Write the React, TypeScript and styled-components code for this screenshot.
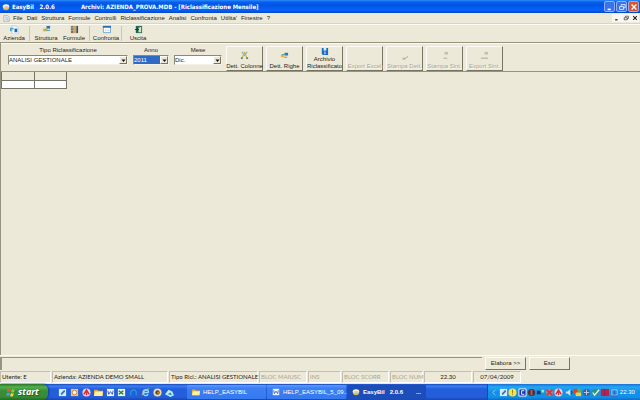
import React from "react";
import styled, { createGlobalStyle, css } from "styled-components";

const Global = createGlobalStyle`
  *, *::before, *::after { box-sizing: border-box; }
  body { margin: 0; background: #ece9d8; }
  button, select, input { font: inherit; color: inherit; margin: 0; padding: 0; border-radius: 0; }
  ul { list-style: none; margin: 0; padding: 0; }
  svg { flex: none; display: block; }
`;

const Window = styled.div`
  display: flex;
  flex-direction: column;
  min-height: 100vh;
  background: #ece9d8;
  color: #1c1c1a;
  font: 6px/8px "Liberation Sans", Arial, sans-serif;
  white-space: nowrap;
`;

const TitleBar = styled.header`
  display: flex;
  align-items: center;
  height: 13px;
  padding: 0 1px 0 2px;
  gap: 2px;
  color: #fff;
  background: linear-gradient(#2b8df8 0, #0a5fee 2px, #0054e3 5px, #0562fb 10px, #0047c8 13px);
`;

const Title = styled.h1`
  display: flex;
  flex: 1;
  gap: 26px;
  margin: 0;
  font: bold 6px/8px "DejaVu Sans Condensed", "DejaVu Sans", sans-serif;
`;

const CaptionButtons = styled.div`
  display: flex;
  gap: 1px;
`;

const CaptionButton = styled.button<{ $close?: boolean }>`
  display: grid;
  place-items: center;
  width: 11px;
  height: 11px;
  border: 1px solid #8fb0f3;
  border-radius: 2px;
  background: ${(p) => (p.$close ? "#e0532c" : "#3a72ea")};
`;

const MenuBar = styled.nav`
  display: flex;
  align-items: center;
  height: 11px;
  padding: 0 1px 0 3px;
  border-bottom: 1px solid #d9d5c3;
`;

const Menus = styled.ul`
  display: flex;
  flex: 1;
  margin-left: 1px;
`;

const MenuButton = styled.button`
  display: block;
  padding: 0 2px;
  border: 0;
  background: none;
`;

const ChildButtons = styled.div`
  display: flex;
  background: #f8f7f2;
`;

const ChildButton = styled.button`
  display: grid;
  place-items: center;
  width: 9px;
  height: 8px;
  border: 0;
  background: none;
`;

const ToolBar = styled.div`
  display: flex;
  height: 18px;
  border-top: 1px solid #fbfaf4;
`;

const Tool = styled.button`
  display: flex;
  flex-direction: column;
  align-items: center;
  justify-content: center;
  width: 28px;
  border: 0;
  background: none;
`;

const Separator = styled.span`
  width: 1px;
  margin: 1px 2px 1px 1px;
  background: #cbc7b6;
`;

const FilterBar = styled.form`
  display: flex;
  align-items: flex-end;
  height: 30px;
  border: solid #97937f;
  border-width: 1px 0 1px 1px;
  box-shadow: inset 0 1px #fbfaf3;
`;

const Fields = styled.div`
  display: flex;
  gap: 5px;
  align-self: flex-start;
  padding: 3px 4px 0 7px;
`;

const Field = styled.label<{ $size: "wide" | "small" | "medium" }>`
  display: flex;
  flex-direction: column;
  align-items: center;
  width: ${(p) => ({ wide: 120, small: 36, medium: 48 })[p.$size]}px;
`;

const Combo = styled.span`
  display: flex;
  width: 100%;
  height: 10px;
  margin-top: 1px;
  border: 1px solid #8c8977;
  border-right-color: #f4f2e8;
  border-bottom-color: #f4f2e8;
  background: #fff;
`;

const Select = styled.select<{ $selected?: boolean }>`
  flex: 1;
  min-width: 0;
  appearance: none;
  border: 0;
  outline: 0;
  line-height: 8px;
  background: #fff;
  ${(p) => p.$selected && css`background: #316ac5; color: #fff;`}
`;

const Arrow = styled.span`
  display: grid;
  place-items: center;
  width: 8px;
  border: 1px solid #fff;
  border-right-color: #77745f;
  border-bottom-color: #77745f;
  background: #ece9d8;
`;

const Commands = styled.div`
  display: flex;
  gap: 3px;
`;

const raised = css`
  border: 1px solid #fbfaf4;
  border-right-color: #77745f;
  border-bottom-color: #77745f;
  background: #ece9d8;
`;

const Command = styled.button`
  display: flex;
  flex-direction: column;
  align-items: center;
  justify-content: flex-end;
  width: 37px;
  height: 25px;
  line-height: 7px;
  white-space: pre;
  ${raised}
  &:disabled { color: #aaa693; text-shadow: 1px 1px #faf8ef; }
`;

const CommandIcon = styled.span`
  display: grid;
  flex: 1;
  place-items: center;
`;

const Workspace = styled.main`
  flex: 1;
  border-left: 1px solid #97937f;
`;

const Grid = styled.table`
  width: 66px;
  border-collapse: collapse;
  table-layout: fixed;
  th, td { height: 8px; padding: 0; border: 1px solid #77756b; }
  th { border-top: 0; }
  td { background: #fff; }
`;

const Footer = styled.div`
  display: flex;
  align-items: center;
  gap: 3px;
  height: 15px;
  padding-right: 70px;
  border-top: 1px solid #fbfaf4;
`;

const Progress = styled.div`
  flex: 1;
  height: 13px;
  border: solid #97937f;
  border-width: 1px 0 0 2px;
`;

const Action = styled.button`
  width: 41px;
  height: 13px;
  ${raised}
`;

const StatusBar = styled.footer`
  display: flex;
  gap: 1px;
  height: 14px;
  padding-top: 1px;
  font-family: Lato, "Liberation Sans", sans-serif;
`;

const StatusCell = styled.span<{ $w: number; $off?: boolean; $center?: boolean }>`
  width: ${(p) => p.$w}px;
  height: 12px;
  padding: 0 1px;
  border: 1px solid #c4c0ae;
  border-right-color: #fff;
  border-bottom-color: #fff;
  line-height: 10px;
  text-align: ${(p) => (p.$center ? "center" : "left")};
  ${(p) => p.$off && css`color: #a8a593;`}
`;

const TaskBar = styled.div`
  display: flex;
  height: 16px;
  color: #fff;
  background: linear-gradient(#1b48b8 0, #3a80f2 2px, #245edb 5px, #245edb 13px, #1b46ac 16px);
`;

const Start = styled.button`
  display: flex;
  align-items: center;
  gap: 2px;
  width: 48px;
  padding-left: 6px;
  border: 0;
  border-radius: 0 6px 6px 0;
  background: linear-gradient(#2a7429, #54b04c 3px, #388d36 7px, #368b34 13px, #236b24);
  box-shadow: 1px 0 2px #123e91;
  font: italic bold 9px/12px "Open Sans", sans-serif;
  text-shadow: 1px 1px 1px #205d20;
`;

const QuickLaunch = styled.div`
  display: flex;
  align-items: center;
  justify-content: space-between;
  width: 139px;
  padding: 0 13px 0 10px;
`;

const IconButton = styled.button`
  display: grid;
  place-items: center;
  width: 9px;
  height: 11px;
  border: 0;
  background: none;
`;

const Tasks = styled.div`
  display: flex;
  flex: 1;
  gap: 1px;
  padding: 1px 0;
`;

const Task = styled.button<{ $active?: boolean }>`
  display: flex;
  align-items: center;
  gap: 3px;
  width: 79px;
  padding: 0 5px;
  border: 0;
  border-radius: 1px;
  background: ${(p) => (p.$active ? "#1c4db8" : "linear-gradient(#5a9cff, #3c80f4 3px, #3679ee)")};
  font-weight: ${(p) => (p.$active ? 700 : 400)};
  span { flex: 1; text-align: left; white-space: pre; }
`;

const Tray = styled.div`
  display: flex;
  align-items: center;
  justify-content: space-between;
  width: 153px;
  padding: 0 5px 0 2px;
  border-left: 1px solid #0b4fb0;
  background: linear-gradient(#1d6fd6, #23a6f2 3px, #1290e8 8px, #1391e8 13px, #0d6bc4);
`;

const Clock = styled.time`
  margin-left: 1px;
`;

type Name = string;

const shapes: Record<Name, React.ReactNode> = {
  app: <><ellipse cx="5" cy="6" rx="4" ry="3" fill="#d8b34a" /><ellipse cx="5" cy="4" rx="4" ry="2.5" fill="#fff6cf" /><path d="M3 5h5" stroke="#6f94b8" /></>,
  doc: <><path d="M1 1h6l2 2v6H1z" fill="#e5eef3" stroke="#9eabbb" /><path d="M3 4h4M3 6h4" stroke="#8bb8ce" /><path d="M6 7h3" stroke="#d4b554" /></>,
  azienda: <><path d="M2 1h5l2 2v7H2z" fill="#f4faff" stroke="#b9cedb" /><path d="M0 3h4v2H2v2H0z" fill="#46abd5" /><path d="M5 4h3v4H5z" fill="#1f67b5" /></>,
  struttura: <><path d="M5 1h4v3H5z" fill="#2578bd" /><path d="M1 4h5v3H1z" fill="#e4bd36" /><path d="M5 4L3 6M5 6h4" stroke="#4c93ad" /></>,
  formule: <><path d="M1 1h3v8H1z" fill="#777467" /><path d="M4 1h3v8H4z" fill="#dba044" /><path d="M7 1h2v8H7z" fill="#3b4e74" /><path d="M1 3h6M1 6h6" stroke="#b8ae91" /></>,
  confronta: <><path d="M1.5 1.5h8v7h-8z" fill="#fff" stroke="#69a4cf" /><path d="M1 2h9" stroke="#2b68af" strokeWidth="2" /><path d="M4 5v2M6 6h2" stroke="#b5c3ce" /></>,
  uscita: <><path d="M2 1h7v8H2z" fill="#206d5c" /><path d="M5 3l3-1v6H5z" fill="#d7e4bb" /><path d="M1 5h4M3 3l2 2-2 2" stroke="#123b38" fill="none" /></>,
  colonne: <><path d="M2 1l3 4 3-4" stroke="#79b9c9" fill="none" strokeWidth="1.3" /><path d="M5 1L2 9M5 1l3 8" stroke="#e1ae2d" strokeWidth="1.3" fill="none" /><path d="M1 7h2v2H1zM7 7h2v2H7z" fill="#438e9d" /></>,
  righe: <><path d="M5 2h4v3H5z" fill="#2578bd" /><path d="M1 4h4v3H1z" fill="#e8b92e" /><path d="M2 4h3M5 7h3" stroke="#5696a7" /></>,
  archivio: <><path d="M2 1h7v8H3L2 7z" fill="#196dc1" /><path d="M4 1h3v3H4z" fill="#d6edff" /><path d="M5 5h1v3H5z" fill="#fff" /></>,
  dett: <path d="M3 8h3l3-2M3 9h3" stroke="#a5a28f" fill="none" />,
  sint: <><path d="M5 1h4v3H5z" fill="#c4c0ae" /><path d="M4 8h4" stroke="#a5a28f" /></>,
  sint2: <><path d="M5 1h4v3H5z" fill="#c4c0ae" /><path d="M1 8h8" stroke="#a5a28f" /></>,
  min: <path d="M2 8h4" stroke="currentColor" strokeWidth="2" />,
  restore: <path d="M4 3.5V2h5v4H7M2 4.5h5V8H2z" fill="none" stroke="currentColor" />,
  close: <path d="M2 2l6 6M8 2L2 8" stroke="currentColor" strokeWidth="1.7" />,
  arrow: <path d="M1 3h8L5 8z" fill="#111" />,
  windows: <><path d="M1 2q2-1 4 0L4 5q-2-1-3 0z" fill="#f05a28" /><path d="M6 2q2 1 3 0L8 5Q7 6 5 5z" fill="#89c940" /><path d="M1 6q1-1 3 0L3 9q-1-1-3 0z" fill="#4f9bec" /><path d="M5 6q2 1 3 0L7 9q-1 1-3 0z" fill="#ffd02f" /></>,
  desk: <><path d="M1 1h8v8H1z" fill="#d6edff" /><path d="M3 6l4-4 1 2-4 4z" fill="#2d77bd" /></>,
  outlook: <><path d="M1 1h8v8H1z" fill="#f4c16e" /><circle cx="5" cy="5" r="2.5" fill="#fff" stroke="#d87520" /></>,
  red: <><circle cx="5" cy="5" r="4.5" fill="#e8d5d9" /><path d="M2 7l3-5 3 5M5 2v6" stroke="#d52d3a" strokeWidth="1.6" fill="none" /></>,
  folder: <><path d="M0 2h4l1 1h5v6H0z" fill="#e0a82f" /><path d="M1 4h9L9 9H0z" fill="#fff0a3" /></>,
  word: <><path d="M1 1h8v8H1z" fill="#eef4ff" /><path d="M2 3l1 4 2-3 2 3 1-4" stroke="#2553b5" fill="none" /></>,
  excel: <><path d="M1 1h8v8H1z" fill="#e5f5e3" /><path d="M2 3l5 4M7 3L2 7" stroke="#267d39" strokeWidth="1.5" /></>,
  cyan: <path d="M2 8V4q3-4 6 0v4" stroke="#259cdb" strokeWidth="1.3" fill="none" />,
  ie: <><path d="M8 7Q5 10 3 7q-2-4 2-5 4 0 3 3H3" stroke="#8ed8ff" strokeWidth="1.6" fill="none" /><path d="M1 8Q4 1 9 1" stroke="#eac557" fill="none" /></>,
  media: <><circle cx="5" cy="5" r="4.5" fill="#e8dfb5" /><circle cx="5" cy="5" r="2.5" fill="#5b463b" /><path d="M5 4l2 1-2 2z" fill="#ef932e" /></>,
  cloud: <><path d="M0 7l4-5 4 2 2 4-4 2z" fill="#bdebf2" /><path d="M3 7l3-2 2 3z" fill="#218ba4" /></>,
  chevron: <path d="M6 2L3 5l3 3" stroke="#8ed0ff" fill="none" />,
  shield: <><circle cx="5" cy="5" r="4.5" fill="#ffe13c" /><path d="M5 2v4M5 7v1" stroke="#8e741d" /></>,
  blue: <><path d="M1 1h8v8H1z" fill="#1836af" stroke="#fff" /><path d="M7 3H4v4h3" stroke="#fff" fill="none" /></>,
  dark: <><circle cx="5" cy="5" r="4" fill="#46333e" /><path d="M5 2v6" stroke="#e34b38" strokeWidth="2" /></>,
  net: <><path d="M1 3h4v4H1z" fill="#183963" /><path d="M6 2h3v3H6z" fill="#a6e2a5" /></>,
  x: <><circle cx="5" cy="5" r="4" fill="#7b95a5" /><path d="M2 2l6 6M8 2L2 8" stroke="#df333c" strokeWidth="2" /></>,
  sound: <><path d="M2 4h2l3-3v8L4 6H2z" fill="#ddd" /><path d="M8 3q2 2 0 4" stroke="#183963" fill="none" /></>,
  mix: <><path d="M1 1h4v5H1z" fill="#e23e28" /><path d="M5 1h4v4H5z" fill="#60b443" /><path d="M3 5h6v4H3z" fill="#f1ce45" /></>,
  globe: <><circle cx="5" cy="5" r="4" fill="#3b5f9f" /><path d="M2 5h6M5 2v6" stroke="#bed5ec" /></>,
  check: <><circle cx="5" cy="5" r="4" fill="#348e88" /><path d="M2 5l2 3 5-6" stroke="#e1f8d4" fill="none" strokeWidth="1.5" /></>,
  block: <><path d="M1 1h9v8H1z" fill="#c21f43" /><path d="M5 1v8" stroke="#70286c" /></>,
  device: <><path d="M2 2h6v6H2z" fill="none" stroke="#a4c5e5" /><path d="M1 9h8M5 3v4" stroke="#385cb0" /></>,
};

function Icon({ name, size = 9 }: { name: Name; size?: number }) {
  return <svg width={size} height={size} viewBox="0 0 10 10" aria-hidden="true">{shapes[name]}</svg>;
}

const menus = ["File", "Dati", "Struttura", "Formule", "Controlli", "Riclassificazione", "Analisi", "Confronta", "Utilita'", "Finestre", "?"];

const tools = [
  { label: "Azienda", icon: "azienda", end: true },
  { label: "Struttura", icon: "struttura" },
  { label: "Formule", icon: "formule", end: true },
  { label: "Confronta", icon: "confronta", end: true },
  { label: "Uscita", icon: "uscita" },
];

const fields = [
  { label: "Tipo Riclassificazione", value: "ANALISI GESTIONALE", size: "wide" as const },
  { label: "Anno", value: "2011", size: "small" as const, selected: true },
  { label: "Mese", value: "Dic.", size: "medium" as const },
];

const commands = [
  { label: "Dett. Colonne", icon: "colonne" },
  { label: "Dett. Righe", icon: "righe" },
  { label: "Archivio\nRiclassificato", icon: "archivio" },
  { label: "Export Excel", off: true },
  { label: "Stampa Dett.", icon: "dett", off: true },
  { label: "Stampa Sint.", icon: "sint", off: true },
  { label: "Export Sint.", icon: "sint2", off: true },
];

const status = [
  { text: "Utente: E", w: 51 },
  { text: "Azienda: AZIENDA DEMO SMALL", w: 116 },
  { text: "Tipo Ricl.: ANALISI GESTIONALE", w: 89 },
  { text: "BLOC MAIUSC", w: 48, off: true },
  { text: "INS", w: 33, off: true },
  { text: "BLOC SCORR", w: 47, off: true },
  { text: "BLOC NUM", w: 33, off: true },
  { text: "22.30", w: 48, center: true },
  { text: "07/04/2009", w: 48, center: true },
];

const launchers = ["desk", "outlook", "red", "folder", "word", "excel", "cyan", "ie", "media", "cloud"];
const trayIcons = ["chevron", "desk", "shield", "blue", "dark", "net", "x", "red", "sound", "mix", "globe", "check", "block", "device"];
const controls = [["min", "Riduci a icona"], ["restore", "Ripristina"], ["close", "Chiudi"]];

export default function App() {
  return (
    <>
      <Global />
      <Window>
        <TitleBar>
          <Icon name="app" size={8} />
          <Title><span>EasyBil &nbsp; 2.0.6</span><span>Archivi: AZIENDA_PROVA.MDB - [Riclassificazione Mensile]</span></Title>
          <CaptionButtons>
            {controls.map(([icon, label]) => (
              <CaptionButton key={icon} $close={icon === "close"} aria-label={label}><Icon name={icon} size={8} /></CaptionButton>
            ))}
          </CaptionButtons>
        </TitleBar>
        <MenuBar>
          <Icon name="doc" size={7} />
          <Menus>{menus.map((m) => <li key={m}><MenuButton>{m}</MenuButton></li>)}</Menus>
          <ChildButtons>
            {controls.map(([icon, label]) => (
              <ChildButton key={icon} aria-label={`${label} finestra`}><Icon name={icon} size={6} /></ChildButton>
            ))}
          </ChildButtons>
        </MenuBar>
        <ToolBar>
          {tools.map((t) => (
            <React.Fragment key={t.label}>
              <Tool><Icon name={t.icon} />{t.label}</Tool>
              {t.end && <Separator />}
            </React.Fragment>
          ))}
        </ToolBar>
        <FilterBar onSubmit={(e) => e.preventDefault()}>
          <Fields>
            {fields.map((f) => (
              <Field key={f.label} $size={f.size}>
                {f.label}
                <Combo>
                  <Select $selected={f.selected}><option>{f.value}</option></Select>
                  <Arrow><Icon name="arrow" size={5} /></Arrow>
                </Combo>
              </Field>
            ))}
          </Fields>
          <Commands>
            {commands.map((c) => (
              <Command key={c.label} type="button" disabled={c.off}>
                {c.icon && <CommandIcon><Icon name={c.icon} /></CommandIcon>}
                {c.label}
              </Command>
            ))}
          </Commands>
        </FilterBar>
        <Workspace>
          <Grid aria-label="Riclassificazione">
            <thead><tr><th /><th /></tr></thead>
            <tbody><tr><td /><td /></tr></tbody>
          </Grid>
        </Workspace>
        <Footer>
          <Progress />
          <Action>Elabora &gt;&gt;</Action>
          <Action>Esci</Action>
        </Footer>
        <StatusBar>
          {status.map((s) => <StatusCell key={s.text} $w={s.w} $off={s.off} $center={s.center}>{s.text}</StatusCell>)}
        </StatusBar>
        <TaskBar>
          <Start><Icon name="windows" size={10} />start</Start>
          <QuickLaunch>
            {launchers.map((n) => <IconButton key={n} aria-label={n}><Icon name={n} /></IconButton>)}
          </QuickLaunch>
          <Tasks>
            <Task><Icon name="folder" size={8} /><span>HELP_EASYBIL</span></Task>
            <Task><Icon name="word" size={8} /><span>HELP_EASYBIL_5_09...</span></Task>
            <Task $active><Icon name="app" size={8} /><span>EasyBil   2.0.6</span>...</Task>
          </Tasks>
          <Tray>
            {trayIcons.map((n) => <IconButton key={n} aria-label={n}><Icon name={n} /></IconButton>)}
            <Clock>22.30</Clock>
          </Tray>
        </TaskBar>
      </Window>
    </>
  );
}
